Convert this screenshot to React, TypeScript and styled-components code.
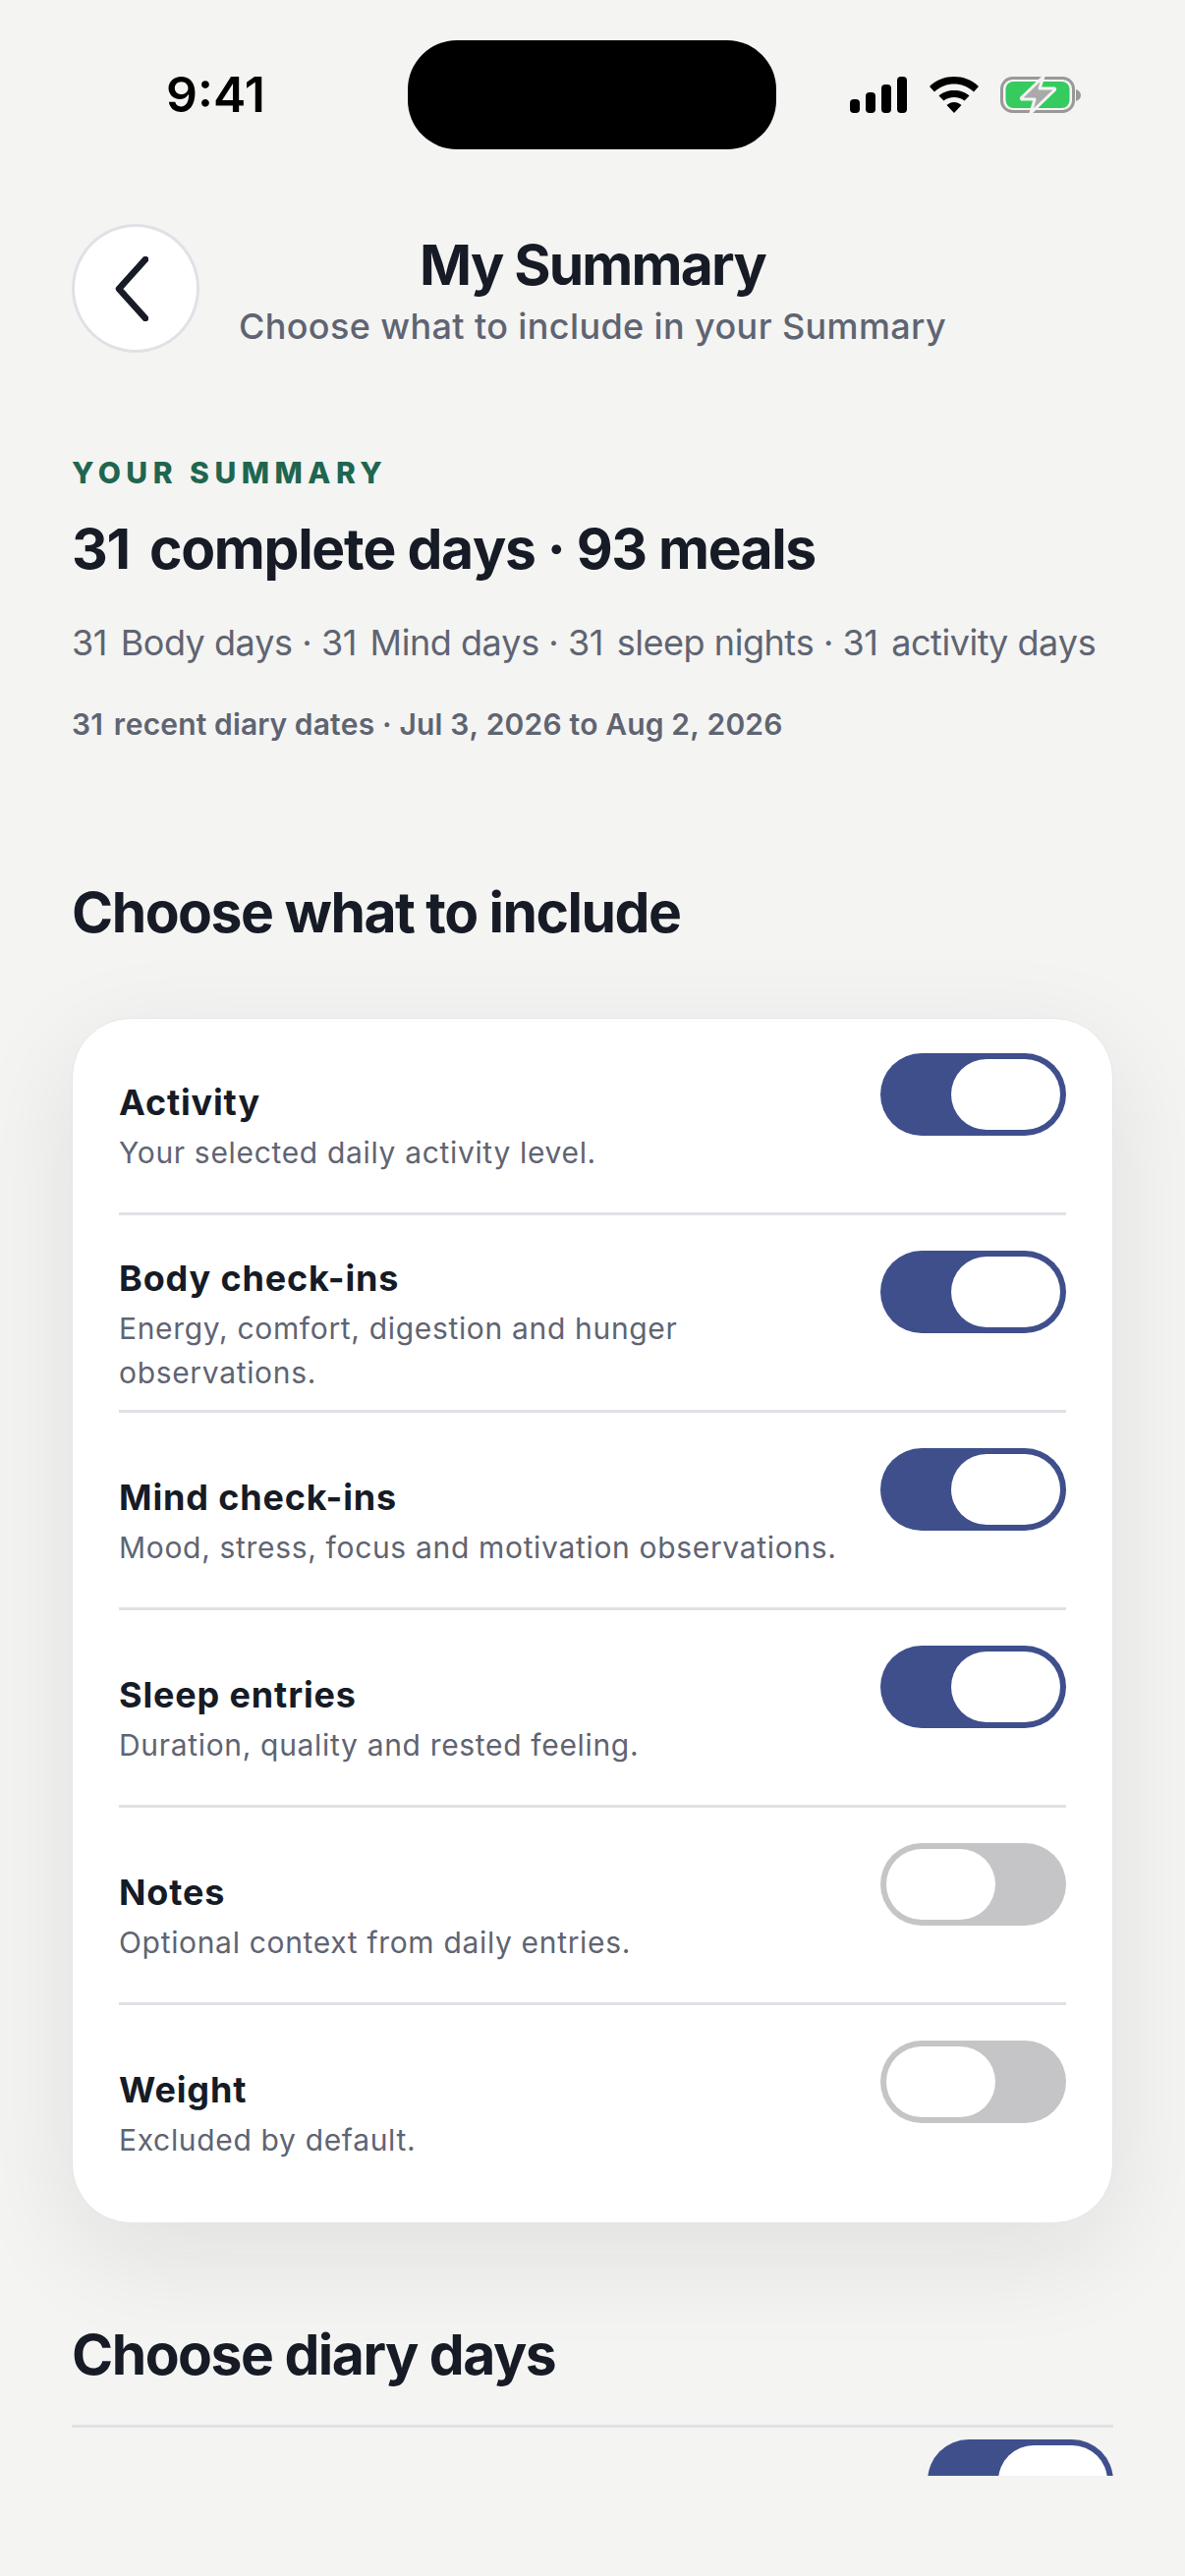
import React from "react";
import styled, { createGlobalStyle } from "styled-components";

const Global = createGlobalStyle`
  html, body { margin: 0; padding: 0; background: #f4f4f2; }
  * { box-sizing: border-box; }
`;

const Phone = styled.div`
  width: 1206px;
  height: 2622px;
  background: #f4f4f2;
  font-family: Inter, "Noto Sans", sans-serif;
  color: #161b26;
  overflow: hidden;
`;

const StatusBar = styled.div`
  height: 152px;
  padding-top: 41px;
  display: grid;
  grid-template-columns: 415px 375px 1fr;
`;

const Clock = styled.div`
  font-size: 50px;
  font-weight: 600;
  color: #000;
  line-height: 111px;
  text-align: center;
  padding-left: 24px;
`;

const Island = styled.div`
  height: 111px;
  background: #000;
  border-radius: 50px;
`;

const StatusIcons = styled.div`
  display: flex;
  align-items: center;
  padding-left: 75px;
  height: 111px;
`;

const WifiSlot = styled.span`
  display: flex;
  margin: 0 22px 0 23px;
`;

const Header = styled.header`
  margin-top: 76px;
  padding: 0 73px;
  display: grid;
  grid-template-columns: 130px 1fr 130px;
  align-items: center;
`;

const BackButton = styled.button`
  width: 130px;
  height: 131px;
  border-radius: 50%;
  border: 3px solid #e0e1e6;
  background: #fff;
  padding: 0 8px 0 0;
  display: flex;
  align-items: center;
  justify-content: center;
`;

const TitleBlock = styled.div`
  text-align: center;
  padding-top: 6px;
`;

const Title = styled.h1`
  margin: 0;
  font-size: 57px;
  line-height: 66px;
  font-weight: 700;
  letter-spacing: -1.8px;
`;

const Subtitle = styled.p`
  margin: 5px 0 0;
  font-size: 36px;
  line-height: 48px;
  font-weight: 550;
  letter-spacing: 0.38px;
  color: #5f6472;
`;

const Scroll = styled.main`
  margin-top: 105px;
  height: 2056px;
  padding: 0 73px;
  overflow: hidden;
`;

const Eyebrow = styled.div`
  font-size: 30px;
  line-height: 34px;
  font-weight: 800;
  letter-spacing: 5.5px;
  color: #1f6650;
`;

const Big = styled.h2`
  margin: 25px 0 0;
  font-size: 57px;
  line-height: 72px;
  font-weight: 700;
  letter-spacing: -1.3px;
  font-kerning: none;
`;

const Meta = styled.p`
  margin: 35px 0 0;
  font-size: 36px;
  line-height: 48px;
  font-weight: 400;
  letter-spacing: -0.45px;
  font-kerning: none;
  color: #5f6472;
`;

const Small = styled.p`
  margin: 38px 0 0;
  font-size: 30px;
  line-height: 42px;
  font-weight: 600;
  letter-spacing: 0.14px;
  font-kerning: none;
  color: #5f6472;
`;

const Count = styled.span<{ $gap: number }>`
  margin-right: ${(p) => p.$gap}px;
`;

const SectionTitle = styled.h2<{ $top: number }>`
  margin: ${(p) => p.$top}px 0 0;
  font-size: 57px;
  line-height: 72px;
  font-weight: 700;
  letter-spacing: -1.5px;
`;

const Card = styled.section`
  margin-top: 71px;
  padding: 0 47px;
  height: 1227px;
  background: #fff;
  border: 1px solid #e6e6e8;
  border-radius: 60px;
  box-shadow: 0 30px 110px rgba(20, 24, 40, 0.09);
`;

const Row = styled.div<{ $h: number; $lead: number }>`
  height: ${(p) => p.$h}px;
  padding-top: ${(p) => p.$lead}px;
  display: flex;
  justify-content: space-between;
  align-items: center;
  border-bottom: 3px solid #e0e1e6;
  &:last-child { border-bottom: 0; }
`;

const RowText = styled.div`
  width: 760px;
`;

const RowTitle = styled.div`
  font-size: 36px;
  line-height: 48px;
  font-weight: 700;
  letter-spacing: 0.85px;
`;

const RowSub = styled.div`
  margin-top: 5px;
  font-size: 30px;
  line-height: 45px;
  font-weight: 400;
  letter-spacing: 0.67px;
  color: #5f6472;
`;

const Toggle = styled.div<{ $on: boolean; $lift?: number }>`
  flex: none;
  align-self: flex-start;
  margin-top: ${(p) => p.$lift ?? 0}px;
  width: 189px;
  height: 84px;
  padding: 6px;
  border-radius: 42px;
  display: flex;
  justify-content: ${(p) => (p.$on ? "flex-end" : "flex-start")};
  background: ${(p) => (p.$on ? "#3f4f8c" : "#c5c5c7")};
`;

const Knob = styled.div`
  width: 111px;
  height: 72px;
  border-radius: 36px;
  background: #fff;
`;

const Rule = styled.div`
  margin-top: 35px;
  height: 3px;
  background: #e0e1e6;
`;

const DayRow = styled.div`
  margin-top: 12px;
  display: flex;
  justify-content: flex-end;
`;

const Chevron = () => (
  <svg width="34" height="66" viewBox="0 0 34 66" fill="none">
    <path d="M31 3 4 33l27 30" stroke="#161b26" strokeWidth="6.500" strokeLinecap="round" strokeLinejoin="round" />
  </svg>
);

const Signal = () => (
  <svg width="58" height="37" viewBox="0 0 58 37" fill="#000">
    <rect x="0" y="23" width="10" height="14" rx="4" />
    <rect x="16" y="16" width="10" height="21" rx="4" />
    <rect x="32" y="8" width="10" height="29" rx="4" />
    <rect x="48" y="0" width="10" height="37" rx="4" />
  </svg>
);

const Wifi = () => (
  <svg width="50" height="37" viewBox="0 0 50 37" fill="#000">
    <path d="M0 10C7 3 16 0 25 0s18 3 25 10l-5 5.500C39 10 32 7.500 25 7.500S11 10 5 15.500Z" />
    <path d="M9.500 19.500C13 16 19 14 25 14s12 2 15.500 5.500l-5 5C33 22.500 29 21 25 21s-8 1.500-10.500 3.500Z" />
    <path d="M17.500 29C20 27 22 26 25 26s5 1 7.500 3L25 37Z" />
  </svg>
);

const Battery = () => (
  <svg width="82" height="39" viewBox="0 0 82 39" fill="none">
    <rect x="1.500" y="2.500" width="73" height="34" rx="11" stroke="#999" strokeWidth="3" />
    <rect x="5.500" y="6" width="65" height="27" rx="8" fill="#35cb5f" />
    <path d="M77 14c3 1 5 3 5 6s-2 5-5 6Z" fill="#999" />
    <path d="M44 1 22 22a1 1 0 0 0 1 2h12l-4 14 24-23a1 1 0 0 0-1-2H40Z" fill="#aaa" stroke="#f4f4f2" strokeWidth="3" strokeLinejoin="round" />
  </svg>
);

const rows = [
  { t: "Activity", s: "Your selected daily activity level.", h: 200, lead: 22, lift: 13, on: true },
  { t: "Body check-ins", s: "Energy, comfort, digestion and hunger observations.", h: 201, lead: 25, lift: 11, on: true },
  { t: "Mind check-ins", s: "Mood, stress, focus and motivation observations.", h: 201, lead: 24, lift: 12, on: true },
  { t: "Sleep entries", s: "Duration, quality and rested feeling.", h: 201, lead: 24, lift: 12, on: true },
  { t: "Notes", s: "Optional context from daily entries.", h: 201, lead: 24, lift: 12, on: false },
  { t: "Weight", s: "Excluded by default.", h: 201, lead: 21, lift: 15, on: false },
];

export default function App() {
  return (
    <Phone>
      <Global />
      <StatusBar>
        <Clock>9:41</Clock>
        <Island />
        <StatusIcons>
          <Signal />
          <WifiSlot><Wifi /></WifiSlot>
          <Battery />
        </StatusIcons>
      </StatusBar>
      <Header>
        <BackButton aria-label="Back"><Chevron /></BackButton>
        <TitleBlock>
          <Title>My Summary</Title>
          <Subtitle>Choose what to include in your Summary</Subtitle>
        </TitleBlock>
      </Header>
      <Scroll>
        <Eyebrow>YOUR SUMMARY</Eyebrow>
        <Big><Count $gap={8}>31</Count> complete days · 93 meals</Big>
        <Meta>
          <Count $gap={4}>31</Count> Body days · <Count $gap={4}>31</Count> Mind days · <Count $gap={4}>31</Count> sleep nights · <Count $gap={4}>31</Count> activity days
        </Meta>
        <Small><Count $gap={3}>31</Count> recent diary dates · Jul 3, 2026 to Aug 2, 2026</Small>
        <SectionTitle $top={135}>Choose what to include</SectionTitle>
        <Card>
          {rows.map((r) => (
            <Row key={r.t} $h={r.h} $lead={r.lead}>
              <RowText>
                <RowTitle>{r.t}</RowTitle>
                <RowSub>{r.s}</RowSub>
              </RowText>
              <Toggle $on={r.on} $lift={r.lift}><Knob /></Toggle>
            </Row>
          ))}
        </Card>
        <SectionTitle $top={98}>Choose diary days</SectionTitle>
        <Rule />
        <DayRow><Toggle $on={true}><Knob /></Toggle></DayRow>
      </Scroll>
    </Phone>
  );
}
